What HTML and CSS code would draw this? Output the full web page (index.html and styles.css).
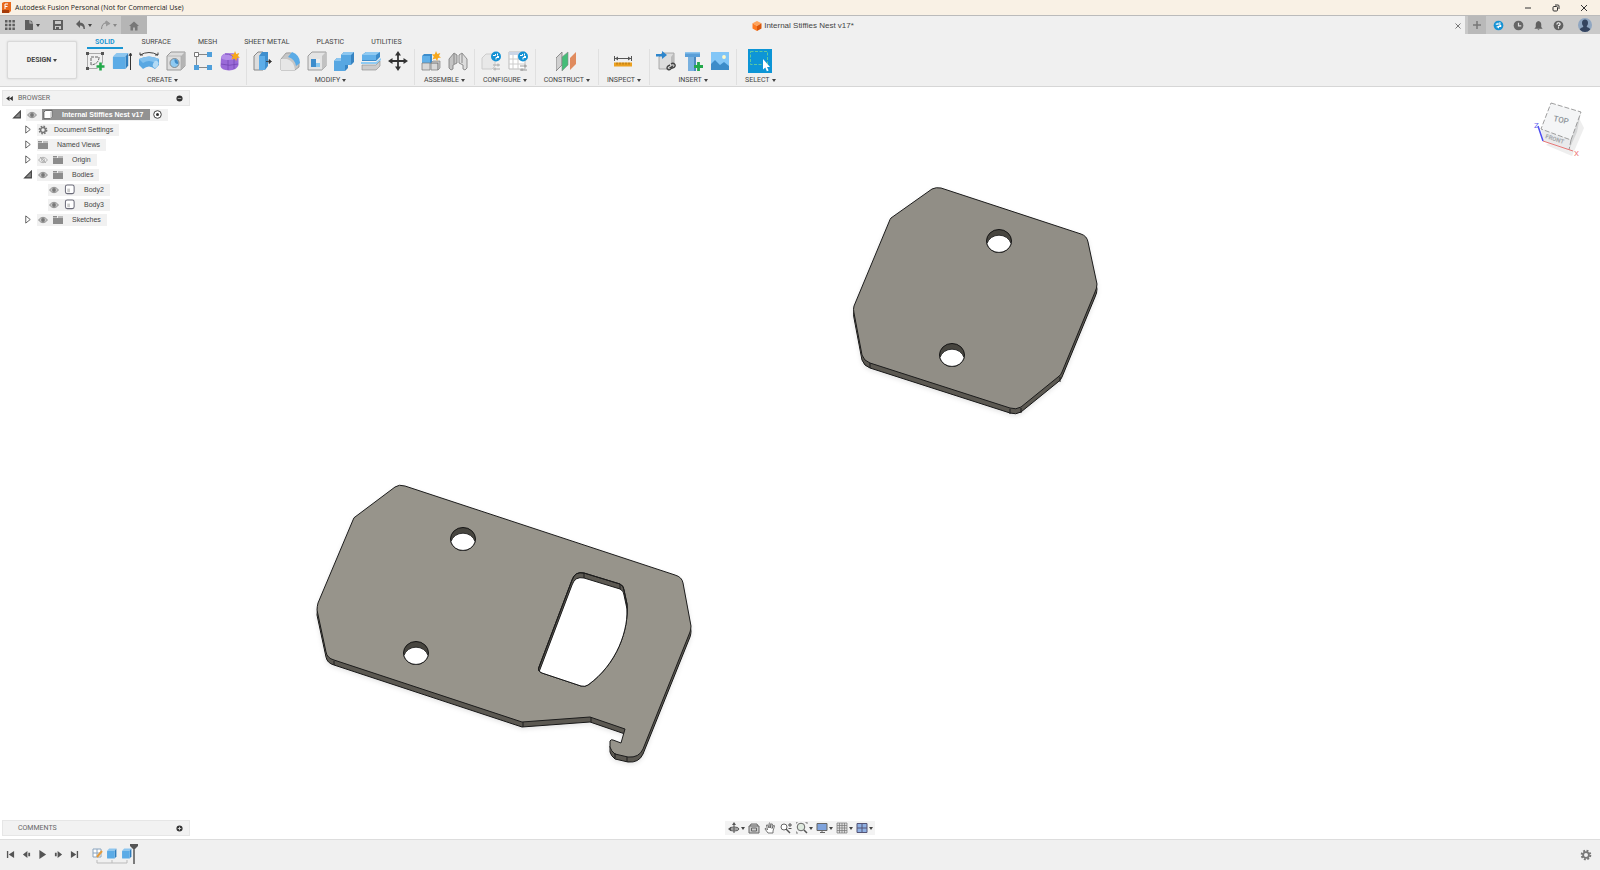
FILE: index.html
```html
<!DOCTYPE html>
<html lang="en">

<head>
    <meta charset="UTF-8">
    <meta name="viewport" content="width=device-width, initial-scale=1.0">
    <title>Autodesk Fusion Personal (Not for Commercial Use)</title>
    <link rel="stylesheet" href="styles.css">
</head>

<body>
    <!-- shared shapes -->
    <svg class="defs" width="0" height="0">
        <symbol id="eye" viewBox="0 0 10 8">
            <path d="M.5 4Q5-1.5 9.500 4Q5 9.500.5 4z" fill="#c4c4c4" stroke="#8a8a8a" stroke-width=".9" />
            <circle cx="5" cy="4" r="1.900" fill="#777" />
        </symbol>
        <symbol id="eye-off" viewBox="0 0 10 8">
            <path d="M.5 4Q5-1.5 9.500 4Q5 9.500.5 4zM2 1l6 6" fill="none" stroke="#aaa" stroke-width=".9" />
            <circle cx="5" cy="4" r="1.500" fill="none" stroke="#aaa" stroke-width=".8" />
        </symbol>
        <symbol id="folder" viewBox="0 0 10 8">
            <path d="M0 0h4v1.500H0zM5 .5h5v1H5zM0 2h10v6H0z" fill="#8c8c8c" />
        </symbol>
        <symbol id="body" viewBox="0 0 12 12">
            <rect x="1" y="1" width="9.500" height="9.500" rx="2" fill="#fff" stroke="#6a6a78" stroke-width="1.100" />
            <path d="M3 5h3v4H3z" fill="#ccc" />
        </symbol>
        <symbol id="component" viewBox="0 0 12 12">
            <path d="M1.500 3.500l2-2h7v7l-2 2h-7z" fill="#fff" stroke="#555" />
            <path d="M8.500 3.500l2-2v7l-2 2z" fill="#ccc" />
        </symbol>
        <symbol id="closed" viewBox="0 0 8 10">
            <path d="M1.500 1v8L6.500 5z" fill="#fff" stroke="#555" />
        </symbol>
        <symbol id="open" viewBox="0 0 8 8">
            <path d="M7 1v6H1z" fill="#888" stroke="#444" />
        </symbol>
        <symbol id="gear" viewBox="0 0 12 12">
            <circle cx="6" cy="6" r="4.300" fill="none" stroke="#777" stroke-width="2" stroke-dasharray="1.900 1.480" />
            <circle cx="6" cy="6" r="2.900" fill="none" stroke="#777" stroke-width="1.800" />
        </symbol>
        <symbol id="box" viewBox="0 0 20 20">
            <path d="M1 5l4-4h13l-3 4z" fill="#8dc6ef" />
            <path d="M15 5l3-4v14l-3 4z" fill="#2f7dbd" />
            <rect x="1" y="5" width="14" height="14" rx="1" fill="#5babe6" />
        </symbol>
    </svg>

    <header class="titlebar">
        <svg class="logo" viewBox="0 0 9 11">
            <path d="M0 1l2-1h7v9l-2 2H0z" fill="#e8681a" />
            <path d="M0 8h7v3H0z" fill="#a53a08" />
            <path d="M3 7V2h3M3 4.500h2.500" fill="none" stroke="#fff" />
        </svg>
        <h1>Autodesk Fusion Personal (Not for Commercial Use)</h1>
        <div class="window-btns">
            <button aria-label="Minimize"><svg viewBox="0 0 8 8"><path d="M1 4h6" /></svg></button>
            <button aria-label="Restore"><svg viewBox="0 0 8 8"><rect x="1" y="2.500" width="4.500" height="4.500" rx="1" /><path d="M3 1h3q1 0 1 1v3" /></svg></button>
            <button aria-label="Close"><svg viewBox="0 0 8 8"><path d="M1 1l6 6M7 1L1 7" /></svg></button>
        </div>
    </header>

    <div class="tabbar">
        <div class="quick">
            <button aria-label="Data panel"><svg viewBox="0 0 10 10"><path d="M0 0h2.500v2.500H0zM3.700 0h2.500v2.500H3.700zM7.400 0h2.500v2.500H7.400zM0 3.700h2.500v2.500H0zM3.700 3.700h2.500v2.500H3.700zM7.400 3.700h2.500v2.500H7.400zM0 7.400h2.500v2.500H0zM3.700 7.400h2.500v2.500H3.700zM7.400 7.400h2.500v2.500H7.400z" /></svg></button>
            <button class="drop" aria-label="File"><svg viewBox="0 0 10 10"><path d="M1 0h4.500v3.500H9V10H1zM6.500 0L9 2.500H6.500z" /></svg></button>
            <button aria-label="Save"><svg viewBox="0 0 10 10"><path fill-rule="evenodd" d="M0 0h10v10H0zM2 1v3h6V1zM2 6v3h1V7h3v2h2V6z" /></svg></button>
            <button class="drop" aria-label="Undo"><svg viewBox="0 0 10 10"><path d="M0 4l4-4v2.500q5 0 5 6.500H7.500Q7.500 5.500 4 5.500V8z" /></svg></button>
            <button class="drop redo" aria-label="Redo"><svg viewBox="0 0 10 10"><path d="M9 4L5 1v2Q1 3 .5 9" fill="none" stroke="#888" /><path d="M5 .5v6L9.500 3.500z" fill="#999" /></svg></button>
        </div>
        <button class="home" aria-label="Home"><svg viewBox="0 0 10 10"><path d="M5 .5L0 5h1.500v4.500h2.500V6.500h2v3h2.500V5H10z" /></svg></button>
        <div class="doc-tab">
            <span class="doc-name">
                <svg viewBox="0 0 10 10"><path d="M5 0l4.500 2.300L5 5 .5 2.300z" fill="#ffa45c" /><path d="M.5 2.300L5 5v5L.5 7.600z" fill="#ff7b22" /><path d="M9.500 2.300L5 5v5l4.500-2.400z" fill="#d9560b" /></svg>
                Internal Stiffies Nest v17*
            </span>
            <button class="doc-close" aria-label="Close tab"><svg viewBox="0 0 8 8"><path d="M1.500 1.500l5 5M6.500 1.500l-5 5" stroke="#777" fill="none" /></svg></button>
        </div>
        <button class="new-tab" aria-label="New tab"><svg viewBox="0 0 10 10"><path d="M5 1v8M1 5h8" stroke="#777" stroke-width="1.500" /></svg></button>
        <div class="account">
            <button aria-label="Extensions"><svg viewBox="0 0 12 12"><circle cx="6" cy="6" r="5.300" fill="#1492d4" /><path d="M3 4.500h2.500V3M9 6H7M6 9V7h3M4 7.500h2M7.500 2.500v3" stroke="#fff" stroke-width="1.200" fill="none" /></svg></button>
            <button aria-label="Job status"><svg viewBox="0 0 12 12"><circle cx="6" cy="6" r="5.300" fill="#666" /><path d="M6 3v3.500h3" stroke="#ddd" stroke-width="1.300" fill="none" /></svg></button>
            <button aria-label="Notifications"><svg viewBox="0 0 12 12"><path d="M6 1q3 .5 3 4v2.500L10.500 9.500h-9L3 7.500V5q0-3.500 3-4zM4.800 10h2.400L6 11.200z" fill="#606060" /></svg></button>
            <button aria-label="Help"><svg viewBox="0 0 12 12"><circle cx="6" cy="6" r="5.300" fill="#606060" /><path d="M4.200 4.800Q4.200 3 6 3t1.800 1.500Q7.800 5.500 6 6.200V7M6 8v1.300" stroke="#fff" stroke-width="1.200" fill="none" /></svg></button>
            <button class="avatar" aria-label="Profile"><svg viewBox="0 0 14 14"><circle cx="7" cy="7" r="7" fill="#8fa6c1" /><path d="M7 1.500q3 0 3 3.500 0 2-1.200 3v1q3 .5 3.500 2.500Q10 14 7 14t-5.300-2.500q.5-2 3.500-2.500V8Q4 7 4 5q0-3.500 3-3.500z" fill="#34445f" /></svg></button>
        </div>
    </div>

    <div class="ribbon">
        <button class="workspace drop">DESIGN</button>
        <div class="ribbon-main">
            <nav class="ribbon-tabs">
                <a href="#" class="active">SOLID</a>
                <a href="#">SURFACE</a>
                <a href="#">MESH</a>
                <a href="#">SHEET METAL</a>
                <a href="#">PLASTIC</a>
                <a href="#">UTILITIES</a>
            </nav>
            <div class="groups">
                <div class="group">
                    <div class="tools">
                        <button aria-label="Create Sketch"><svg viewBox="0 0 20 20"><path d="M2.500 2.500h15v10M2.500 2.500v15h10" fill="none" stroke="#aaa" /><path d="M1 1h3v3H1zM16 1h3v3h-3zM1 16h3v3H1z" fill="#555" /><path d="M6 14V6h8q0 7-8 8z" fill="none" stroke="#666" stroke-dasharray="3 1" /><path d="M15.500 11.500v8M11.500 15.500h8" stroke="#22a84a" stroke-width="2.600" /></svg></button>
                        <button aria-label="Extrude"><svg viewBox="0 0 20 20"><use href="#box" width="18" height="20" /><path d="M18.500 19V3M17 5l1.500-3L20 5" stroke="#333" fill="none" /></svg></button>
                        <button aria-label="Revolve"><svg viewBox="0 0 20 20"><path d="M0 8Q10 3 20 8v6l-4 4q-6-5-12 0l-4-4z" fill="#5aa8e2" /><path d="M0 8Q10 3 20 8l-4 4q-6-4-12 0z" fill="#83c1ee" /><ellipse cx="16.800" cy="13.500" rx="2.500" ry="3.600" fill="#b4dbf5" transform="rotate(25 17 13)" /><path d="M1 4Q10-1 19 4M1 1.500V4h3M19 1.500V4h-3" fill="none" stroke="#444" /></svg></button>
                        <button aria-label="Hole"><svg viewBox="0 0 20 20"><path d="M1 5l4-4h14v14l-4 4H1z" fill="#ddd" stroke="#999" /><path d="M15 5l4-4v14l-4 4z" fill="#b4b4b4" /><path d="M1 5h14v14" fill="none" stroke="#aaa" stroke-width=".7" /><circle cx="8.500" cy="12" r="4.500" fill="#8fcaf2" stroke="#777" stroke-width=".8" /><path d="M8.500 8a4 4 0 0 1 3.500 5Q8 13 8.500 8z" fill="#3f8cc8" /></svg></button>
                        <button aria-label="Pattern"><svg viewBox="0 0 20 20"><path d="M6 3.500h8M3.500 6v8M6 16.500h8" stroke="#888" /><path d="M1.500 1.500h4v4h-4z" fill="#fff" stroke="#777" /><path d="M14 1h5v5h-5zM14 14h5v5h-5zM1 14h5v5H1z" fill="#4f9fdb" /></svg></button>
                        <button aria-label="Create Form"><svg viewBox="0 0 20 20"><path d="M1 7q1-5 8-5 9 0 9.500 5v7Q17 19 9 19.500 1 19 .5 15z" fill="#9a6ad8" /><path d="M1 7q1-5 8-5 9 0 9.500 5Q14 9 8.500 9 3 9 1 7z" fill="#b38ce8" /><path d="M8 9v10M1 13q8 2.500 17 0M5 3q8 0 9 5v10" fill="none" stroke="#7446b4" stroke-width=".8" /><path d="M15 0l1.300 3 3-1-1.300 3 2 1.500-3 .5-.8 3-1.700-2.500-3 1 1.300-3-2-2 3-.3z" fill="#f7a81b" /></svg></button>
                    </div>
                    <button class="label drop">CREATE</button>
                </div>
                <div class="group">
                    <div class="tools">
                        <button aria-label="Press Pull"><svg viewBox="0 0 20 20"><path d="M1 5l4-4h5v18H1z" fill="#ddd" stroke="#888" /><path d="M6 5l3-4h6v14l-3 4H6z" fill="#3f8fce" /><path d="M6 5h6v14H6z" fill="#5dade8" /><path d="M13 10.500h4M16 8.500l2.500 2-2.500 2z" stroke="#333" fill="#333" stroke-width=".8" /></svg></button>
                        <button aria-label="Fillet"><svg viewBox="0 0 20 20"><path d="M1 8l5-6q9-2 13 9v5l-4 3H1z" fill="#c6c6c6" stroke="#888" stroke-width=".7" /><path d="M1 8h6q7 2 8 11H1z" fill="#e6e6e6" /><path d="M8 6l4-5q8 3 8 11l-4 3Q15 8 8 6z" fill="#5aabe6" /></svg></button>
                        <button aria-label="Shell"><svg viewBox="0 0 20 20"><path d="M1 5l4-4h14v14l-4 4H1z" fill="#e4e4e4" stroke="#888" stroke-width=".8" /><path d="M15 5l4-4v14l-4 4z" fill="#c2c2c2" /><path d="M4 8h9v8H4z" fill="#8bc9f0" /><path d="M4 8h5v8H4z" fill="#3d8dcc" /><path d="M9 8h4v4H9z" fill="#eee" /></svg></button>
                        <button aria-label="Combine"><svg viewBox="0 0 20 20"><path d="M7 4l3-3h10v10l-3 3h-3v3l-3 3H0V10l3-3h4z" fill="#3784c2" /><path d="M7 4h10v10h-6v6H0V10h7z" fill="#57a7e2" /><path d="M7 4l3-3h10l-3 3zM0 10l3-3h4v3z" fill="#8bc6f0" /></svg></button>
                        <button aria-label="Offset Face"><svg viewBox="0 0 20 20"><path d="M1 4l4-3h14v5l-4 4H1z" fill="#3c8bc9" /><path d="M1 4h14v5H1z" fill="#62b0e9" /><path d="M1 4l4-3h14l-4 3z" fill="#90caf2" /><path d="M0 11h15l5-4v2l-4 4H0z" fill="#8fcbf3" /><path d="M1 14h14l4-4v5l-4 4H1z" fill="#ccc" stroke="#888" stroke-width=".6" /></svg></button>
                        <button aria-label="Move"><svg viewBox="0 0 20 20"><path d="M10 3v14M3 10h14" stroke="#333" stroke-width="1.800" /><path d="M10 0l3 4.500H7zM10 20l3-4.500H7zM0 10l4.500-3v6zM20 10l-4.500-3v6z" fill="#333" /></svg></button>
                    </div>
                    <button class="label drop">MODIFY</button>
                </div>
                <div class="group">
                    <div class="tools">
                        <button aria-label="New Component"><svg viewBox="0 0 20 20"><path d="M1 5l2-2h8v8l-2 2H1z" fill="#3d8dcc" /><path d="M1 5h8v8H1z" fill="#60afe8" /><path d="M1 12h8v7H1zM10 12h7v7h-7z" fill="#d8d8d8" stroke="#777" stroke-width=".7" /><path d="M10 12l2-2h7v7l-2 2v-7z" fill="#c3c3c3" stroke="#777" stroke-width=".6" /><path d="M15 0l1.300 3 3-1-1.300 3 2 1.500-3 .5-.8 3-1.700-2.500-3 1 1.300-3-2-2 3-.3z" fill="#f7a81b" /></svg></button>
                        <button aria-label="Joint"><svg viewBox="0 0 20 20"><path d="M1 8l5-6 3 2v8l-4 2v4l-2 1-2-2z" fill="#c4c4c4" stroke="#777" stroke-width=".8" /><path d="M11 4l3-2 5 6v9l-2 2-2-1v-4l-4-2z" fill="#ddd" stroke="#777" stroke-width=".8" /><path d="M6 3v10M14 3v9" stroke="#888" /></svg></button>
                    </div>
                    <button class="label drop">ASSEMBLE</button>
                </div>
                <div class="group">
                    <div class="tools">
                        <button aria-label="Configure"><svg viewBox="0 0 20 20"><path d="M1 7l4-4h9v12l-3 3H1z" fill="#e8e8e8" stroke="#ccc" /><path d="M12 14h7M12 18h7M17 12.500v3M14 16.500v3" stroke="#aaa" /><circle cx="15" cy="5.500" r="5" fill="#1492d4" /><path d="M12 4.500h2.500V3M18 5.500h-2M15 8.500v-2h3M16.500 2.500v2" stroke="#fff" fill="none" /></svg></button>
                        <button aria-label="Configuration table"><svg viewBox="0 0 20 20"><path d="M1 1h16v17H1z" fill="#fff" stroke="#bbb" /><path d="M1 1h16v3H1z" fill="#ccd5e6" /><path d="M1 8h16M1 13h16M5 4v14M10 4v14" stroke="#ccc" /><path d="M12 15h7M12 19h7M17 13.500v3M14 17.500v3" stroke="#999" /><circle cx="15" cy="5.500" r="5" fill="#1492d4" /><path d="M12 4.500h2.500V3M18 5.500h-2M15 8.500v-2h3M16.500 2.500v2" stroke="#fff" fill="none" /></svg></button>
                    </div>
                    <button class="label drop">CONFIGURE</button>
                </div>
                <div class="group">
                    <div class="tools">
                        <button aria-label="Offset Plane"><svg viewBox="0 0 20 20"><path d="M0 7l6-6v13l-6 6z" fill="#d0d0d0" stroke="#777" stroke-width=".8" /><path d="M6 6l6-5v13l-6 6z" fill="#45bd78" stroke="#888" stroke-width=".6" /><path d="M14 7l6-6v12l-6 6z" fill="#e08b5e" /></svg></button>
                    </div>
                    <button class="label drop">CONSTRUCT</button>
                </div>
                <div class="group">
                    <div class="tools">
                        <button aria-label="Measure"><svg viewBox="0 0 20 20"><path d="M1.500 5v5M18.500 5v5M2 7.500h16" stroke="#555" /><path d="M2 7.500l3-2v4zM18 7.500l-3-2v4z" fill="#555" /><path d="M1 11.500h18v4H1z" fill="#eca120" /><path d="M4 11.500v2M7 11.500v2M10 11.500v2M13 11.500v2M16 11.500v2" stroke="#9a6207" stroke-width=".8" /></svg></button>
                    </div>
                    <button class="label drop">INSPECT</button>
                </div>
                <div class="group">
                    <div class="tools">
                        <button aria-label="Insert Derive"><svg viewBox="0 0 20 20"><path d="M3 6l3-4h12v12l-3 4H3z" fill="#ddd" stroke="#999" stroke-width=".8" /><path d="M15 6l3-4v12l-3 4z" fill="#bbb" /><path d="M0 3h6V0l5 4-5 4V5.500H0z" fill="#2e86cc" /><path d="M14 14l-2 1q-2 2 0 3.500 2 1 3-1M15 17.500l3-1q2-2 .5-3.500t-3.500 0M13.500 17l3.500-2" fill="none" stroke="#444" stroke-width="1.400" /></svg></button>
                        <button aria-label="Insert Fastener"><svg viewBox="0 0 20 20"><path d="M2 1h15v5H2z" fill="#5a9fd8" /><path d="M2 1h15v1.500H2z" fill="#8fc5ee" /><path d="M5 6h8v14H5z" fill="#79b1df" /><path d="M11 6h2v14h-2z" fill="#4a88be" /><path d="M15.500 11v9M11 15.500h9" stroke="#22a84a" stroke-width="2.800" /></svg></button>
                        <button aria-label="Canvas"><svg viewBox="0 0 20 20"><path d="M1 1h18v18H1z" fill="#82c6f7" /><path d="M1 13l4-4 5 5 4-3 5 4v4H1z" fill="#3c8cc9" /><circle cx="14" cy="6" r="1.900" fill="#fff8c8" /></svg></button>
                    </div>
                    <button class="label drop">INSERT</button>
                </div>
                <div class="group">
                    <div class="tools">
                        <button class="select-btn" aria-label="Select"><svg viewBox="0 0 24 24"><path d="M0 0h24v24H0z" fill="#0d95d6" /><path d="M2.500 2.500h17v13h-17z" fill="none" stroke="#5dc8a0" stroke-dasharray="3 1.500" /><path d="M15 10v10.500l2.300-2 1.600 3.700 1.700-.8-1.600-3.500h3z" fill="#fff" /></svg></button>
                    </div>
                    <button class="label drop">SELECT</button>
                </div>
            </div>
        </div>
    </div>

    <main class="viewport">
        <svg class="model" viewBox="0 87 1600 752">
            <defs>
                <path id="plate-a" d="M891 218l41-29q4-2 9-1l140 46q6 2 7 8l9 42q0 4-2 8l-33 80q-1 3-4 5l-37 30q-5 3-11 1l-140-45q-6-2-8-8l-8-42q-1-4 0-7l35-84q1-3 2-4z" />
                <path id="plate-b" d="M355 517l40-30q4-3 10-1l270 89q7 2 8 8l8 43q0 3-1 6l-47 117q-4 9-15 8l-13-3q-4-3-5-7v-6q1-2 3-1l8 3 4-14-35-12-68 5-188-62q-7-2-8-8l-9-42q0-3 1-7l35-83q1-3 2-3z" />
                <path id="window" d="M572 580q3-9 12-7l36 11q4 2 4 6l3 14c2 26-10 60-39 81q-3 2-7 1l-39-13q-5-2-3-6z" />
                <clipPath id="window-clip"><use href="#window" /></clipPath>
                <g id="hole">
                    <ellipse rx="12.500" ry="11.500" fill="#47453f" stroke="#151515" />
                    <path d="M-12.100 2.800A12.500 11.500 0 0 1 12.100 2.800A12.500 11.500 0 0 1-12.100 2.800z" fill="#fff" stroke="#151515" stroke-width=".8" />
                </g>
            </defs>
            <g class="plate">
                <use class="side" href="#plate-a" y="5" />
                <use class="side-fill" href="#plate-a" y="3" />
                <use class="face" href="#plate-a" />
                <path class="edge" d="M870 363v5M1010 409v5M1021 408v5M1060 377v5" />
                <use href="#hole" x="999" y="241" />
                <use href="#hole" x="952" y="355" />
            </g>
            <g class="plate plate-light">
                <use class="side" href="#plate-b" y="5" />
                <use class="side-fill" href="#plate-b" y="3" />
                <use class="face" href="#plate-b" />
                <path class="edge" d="M334 661v4M523 722v5M591 717v5M615 753v5M627 757v5" />
                <use href="#hole" x="463" y="539" />
                <use href="#hole" x="416" y="653" />
                <use class="side" href="#window" />
                <g clip-path="url(#window-clip)">
                    <use class="cut" href="#window" y="5" />
                    <path class="edge" d="M584 573v5M620 584v5" />
                </g>
                <use class="edge" href="#window" />
            </g>
        </svg>

        <svg class="viewcube" viewBox="1530 98 56 62">
            <path d="M1546 145l26 11 12-28-5-10z" fill="#e2e2e2" opacity=".6" />
            <path d="M1551 103l30 9-10 28-30-11z" fill="#f4f5f6" />
            <path d="M1541 129l30 11-2 10-26-9z" fill="#e9eaeb" />
            <path d="M1581 112l-10 28-2 10 8-18z" fill="#d5d6d7" />
            <path d="M1551 103l30 9-10 28-30-11zM1571 140l-2 10" fill="none" stroke="#888" stroke-width=".8" stroke-dasharray="5 2" />
            <text x="1553" y="121" transform="rotate(12 1553 121)" class="cube-top">TOP</text>
            <text x="1545" y="138" transform="rotate(18 1545 138)" class="cube-front">FRONT</text>
            <path d="M1543 141l-5-15" stroke="#4d4df0" stroke-width="1.500" />
            <path d="M1543 141l30 10" stroke="#e87878" />
            <text x="1534" y="128" class="axis-z">Z</text>
            <text x="1574" y="156" class="axis-x">X</text>
        </svg>

        <aside class="browser">
            <div class="panel-head">
                <svg class="collapse" viewBox="0 0 8 6"><path d="M4 0v6L0 3zM8 0v6L4 3z" fill="#333" /></svg>
                <span>BROWSER</span>
                <button aria-label="Display settings"><svg viewBox="0 0 8 8"><circle cx="4" cy="4" r="3.500" fill="#333" /><path d="M2 4h4" stroke="#aaa" /></svg></button>
            </div>
            <ul class="tree">
                <li class="root">
                    <svg class="twisty"><use href="#open" /></svg>
                    <div class="node">
                        <svg class="eye"><use href="#eye" /></svg>
                        <span class="picked"><svg class="body"><use href="#component" /></svg>Internal Stiffies Nest v17</span>
                        <svg class="radio" viewBox="0 0 9 9"><circle cx="4.500" cy="4.500" r="3.800" fill="#fff" stroke="#444" /><circle cx="4.500" cy="4.500" r="1.500" fill="#333" /></svg>
                    </div>
                </li>
                <li><svg class="twisty"><use href="#closed" /></svg>
                    <div class="node"><svg class="gear"><use href="#gear" /></svg>Document Settings</div>
                </li>
                <li><svg class="twisty"><use href="#closed" /></svg>
                    <div class="node"><svg class="folder"><use href="#folder" /></svg>Named Views</div>
                </li>
                <li><svg class="twisty"><use href="#closed" /></svg>
                    <div class="node"><svg class="eye"><use href="#eye-off" /></svg><svg class="folder"><use href="#folder" /></svg>Origin</div>
                </li>
                <li><svg class="twisty"><use href="#open" /></svg>
                    <div class="node"><svg class="eye"><use href="#eye" /></svg><svg class="folder"><use href="#folder" /></svg>Bodies</div>
                </li>
                <li class="leaf">
                    <div class="node"><svg class="eye"><use href="#eye" /></svg><svg class="body"><use href="#body" /></svg>Body2</div>
                </li>
                <li class="leaf">
                    <div class="node"><svg class="eye"><use href="#eye" /></svg><svg class="body"><use href="#body" /></svg>Body3</div>
                </li>
                <li><svg class="twisty"><use href="#closed" /></svg>
                    <div class="node"><svg class="eye"><use href="#eye" /></svg><svg class="folder"><use href="#folder" /></svg>Sketches</div>
                </li>
            </ul>
        </aside>

        <div class="bottom">
            <div class="panel-head">
                <span>COMMENTS</span>
                <button aria-label="Add comment"><svg viewBox="0 0 8 8"><circle cx="4" cy="4" r="3.500" fill="#333" /><path d="M2 4h4M4 2v4" stroke="#ddd" /></svg></button>
            </div>
            <div class="navbar">
                <button class="drop" aria-label="Orbit"><svg viewBox="0 0 12 12"><ellipse cx="6" cy="7" rx="5" ry="2" fill="none" stroke="#555" /><path d="M6 2v9M2 7h8" stroke="#555" /><path d="M6 0l2 3H4zM0 7l3-2v4z" fill="#555" /></svg></button>
                <button aria-label="Look At"><svg viewBox="0 0 12 12"><path d="M1 4h10v7H1zM2 4l1-2h6l1 2M3.500 6h5v3h-5z" fill="#ccc" stroke="#666" /></svg></button>
                <button aria-label="Pan"><svg viewBox="0 0 12 12"><path d="M4 11L1 7q0-1 1-.5L3.500 8 2.500 3q.5-1 1.200 0L5 6V1.500q.6-1 1.200 0V6l1-4q.8-.8 1.200 0L8 6.500l1.500-3q1-.5 1 .5L9 9v2z" fill="#fff" stroke="#555" stroke-width=".8" /></svg></button>
                <button aria-label="Zoom"><svg viewBox="0 0 12 12"><circle cx="4" cy="5" r="3" fill="#fff" stroke="#666" /><path d="M6 7l4 4" stroke="#555" stroke-width="1.500" /><path d="M8 3h4M10 1v4M8.500 6.500h3" stroke="#555" /></svg></button>
                <button class="drop" aria-label="Fit"><svg viewBox="0 0 12 12"><circle cx="5" cy="5" r="3.800" fill="#dfeadf" stroke="#666" /><path d="M8 8l3 3" stroke="#555" stroke-width="1.500" /><path d="M0 2V0h2M9 0h2v2M0 9v2h2" fill="none" stroke="#666" stroke-width=".8" /></svg></button>
                <button class="drop" aria-label="Display Settings"><svg viewBox="0 0 12 12"><path d="M1 1.500h10v7H1z" fill="#7fa3dc" stroke="#666" /><path d="M4 10.500h5M6 9v2" stroke="#666" /></svg></button>
                <button class="drop" aria-label="Grid and Snaps"><svg viewBox="0 0 12 12"><path d="M1 1h10v10H1z" fill="#ddd" /><path d="M1 1h10v10H1zM3.500 1v10M6 1v10M8.500 1v10M1 3.500h10M1 6h10M1 8.500h10" fill="none" stroke="#777" stroke-width=".7" /></svg></button>
                <button class="drop" aria-label="Viewports"><svg viewBox="0 0 12 12"><path d="M1 1.500h10v9H1z" fill="#8fb0e2" stroke="#557" /><path d="M6 1.500v9M1 6h10" stroke="#557" /></svg></button>
            </div>
        </div>
    </main>

    <footer class="timeline">
        <div class="playback">
            <button aria-label="Go to start"><svg viewBox="0 0 10 10"><path d="M1 1h1.500v8H1zM9 1v8L3 5z" /></svg></button>
            <button aria-label="Step back"><svg viewBox="0 0 10 10"><path d="M6 1v8L1 5zM7 3h2v4H7z" /></svg></button>
            <button aria-label="Play"><svg viewBox="0 0 10 10"><path d="M1.500 0v10L9 5z" /></svg></button>
            <button aria-label="Step forward"><svg viewBox="0 0 10 10"><path d="M4 1v8l5-4zM1 3h2v4H1z" /></svg></button>
            <button aria-label="Go to end"><svg viewBox="0 0 10 10"><path d="M7.500 1H9v8H7.500zM1 1v8l6-4z" /></svg></button>
        </div>
        <svg class="features" viewBox="0 0 48 24">
            <path d="M1 6h8v8H1zM1 10h8M5 6v8" fill="#fff" stroke="#8aa4be" />
            <path d="M10 8L5 14" stroke="#e59b3c" stroke-width="2" />
            <use href="#box" x="14" y="5" width="12" height="11" />
            <use href="#box" x="29" y="5" width="12" height="11" />
            <path d="M5 17v3h30v-3M20 17v3" fill="none" stroke="#bbb" />
            <path d="M38 1h8v2l-3 3h-2l-3-3z" fill="#555" />
            <path d="M42 3v18" stroke="#555" stroke-width="1.500" />
        </svg>
        <button class="settings" aria-label="Timeline settings"><svg viewBox="0 0 12 12"><use href="#gear" /></svg></button>
    </footer>
</body>

</html>
```
FILE: styles.css
```css
* {
    box-sizing: border-box;
    margin: 0;
    padding: 0;
}

body {
    display: flex;
    flex-direction: column;
    height: 100vh;
    overflow: hidden;
    background: #fff;
    color: #444;
    font: 7px/9px "Roboto", "Liberation Sans", sans-serif;
}

svg {
    display: block;
    flex: none;
}

button {
    display: flex;
    align-items: center;
    justify-content: center;
    border: 0;
    background: none;
    color: inherit;
    font: inherit;
}

a {
    color: inherit;
    text-decoration: none;
}

ul {
    list-style: none;
}

.defs {
    position: absolute;
}

/* small arrow of the drop-down buttons */
.drop::after {
    content: "";
    margin-left: 2px;
    border: 2px solid transparent;
    border-top: 3px solid #444;
    border-bottom: 0;
}

/* title bar */
.titlebar {
    display: flex;
    align-items: center;
    height: 15px;
    padding: 0 2px;
    background: #f9f1e5;
}

.logo {
    width: 9px;
    height: 11px;
    margin-right: 4px;
}

.titlebar h1 {
    flex: 1;
    font: 7px/15px "Open Sans", sans-serif;
    color: #222;
}

.window-btns {
    display: flex;
}

.window-btns button {
    width: 28px;
    height: 14px;
}

.window-btns svg {
    width: 8px;
    height: 8px;
    fill: none;
    stroke: #333;
}

/* quick access and document tabs */
.tabbar {
    display: flex;
    height: 19px;
    border-top: 1px solid #bbb;
    background: #c9c9c9;
}

.quick {
    display: flex;
    align-items: center;
    gap: 9px;
    width: 121px;
    padding-left: 5px;
}

.quick button:nth-child(3),
.quick button:nth-child(4) {
    margin-left: 4px;
}

.tabbar svg {
    width: 10px;
    height: 10px;
    fill: #5e5e5e;
}

.quick .redo::after {
    border-top-color: #888;
}

.home {
    width: 26px;
    padding-top: 2px;
    background: #b5b5b5;
}

.home svg {
    fill: #777;
}

.doc-tab {
    display: flex;
    flex: 1;
    align-items: center;
    padding-top: 1px;
    background: #f0f0f0;
}

.doc-name {
    display: flex;
    flex: 1;
    align-items: center;
    justify-content: center;
    gap: 2px;
    padding-left: 8px;
    font: 8px/18px "Liberation Sans", Arial, sans-serif;
}

.doc-close {
    width: 14px;
    height: 18px;
}

.doc-close svg {
    width: 8px;
    height: 8px;
}

.new-tab {
    width: 18px;
    margin: 0 2px 0 3px;
    background: #b9b9b9;
}

.account {
    display: flex;
    align-items: center;
    padding-right: 8px;
}

.account button {
    width: 20px;
}

.account .avatar {
    width: 24px;
    justify-content: flex-end;
}

.account svg {
    width: 11px;
    height: 11px;
}

.account .avatar svg {
    width: 14px;
    height: 14px;
}

/* ribbon */
.ribbon {
    display: flex;
    height: 53px;
    border-bottom: 1px solid #d6d6d6;
    background: #f0f0f0;
}

.workspace {
    width: 70px;
    height: 38px;
    margin: 7px 2px 0 7px;
    border: 1px solid #d9d9d9;
    border-radius: 2px;
    background: #f3f3f3;
    box-shadow: 0 0 2px #ccc;
    font-weight: 700;
}

.ribbon-tabs {
    display: flex;
    gap: 11px;
    height: 15px;
    padding-left: 8px;
}

.ribbon-tabs a {
    padding: 4px 8px 0;
    line-height: 8px;
}

.ribbon-tabs .active {
    border-bottom: 2px solid #1a96d2;
    color: #1a96d2;
    font-weight: 700;
}

.groups {
    display: flex;
}

.group {
    display: flex;
    flex-direction: column;
    align-items: center;
    padding: 0 3px 0 2px;
    border-right: 1px solid #e0e0e0;
}

.group:last-child {
    border: 0;
}

.tools {
    display: flex;
    align-items: center;
    height: 24px;
}

.tools button {
    width: 27px;
}

.tools svg {
    width: 20px;
    height: 20px;
}

.tools .select-btn svg {
    width: 24px;
    height: 24px;
}

.label {
    height: 12px;
    padding: 2px 5px 0 6px;
}

/* canvas */
.viewport {
    position: relative;
    display: flex;
    flex: 1;
    flex-direction: column;
    justify-content: space-between;
    min-height: 0;
    padding: 3px 2px;
}

.model {
    position: absolute;
    inset: 0;
    width: 100%;
    height: 100%;
}

.plate {
    filter: drop-shadow(0 2px 2px rgba(0, 0, 0, .1));
}

.side {
    fill: #5c5952;
    stroke: #151515;
}

.side-fill {
    fill: #5c5952;
}

.face {
    fill: #918e86;
    stroke: #1c1c1c;
}

.plate-light .face {
    fill: #97948b;
}

.edge {
    fill: none;
    stroke: #1c1c1c;
}

.cut {
    fill: #fff;
    stroke: #1c1c1c;
}

.viewcube {
    position: absolute;
    top: 11px;
    right: 14px;
    width: 56px;
    height: 62px;
}

.cube-top {
    font: 500 8px "Roboto", sans-serif;
    fill: #8f959b;
}

.cube-front {
    font: 700 6px "Roboto", sans-serif;
    fill: #a5a8ab;
}

.axis-z,
.axis-x {
    font: 8px "Roboto", sans-serif;
    fill: #6464ee;
}

.axis-x {
    fill: #ee7777;
}

.browser {
    position: relative;
}

.panel-head {
    display: flex;
    align-items: center;
    width: 188px;
    height: 16px;
    padding: 0 6px 0 15px;
    border: 1px solid #e6e6e6;
    background: #f2f2f2;
    color: #666;
}

.panel-head span {
    flex: 1;
}

.panel-head svg {
    width: 7px;
    height: 7px;
}

.panel-head .collapse {
    height: 5px;
    margin: 0 5px 0 -12px;
}

.tree {
    display: flex;
    flex-direction: column;
    gap: 4px;
    padding-top: 3px;
    font: 7px/11px "Liberation Sans", Arial, sans-serif;
}

.tree li {
    display: flex;
    align-items: center;
    gap: 4px;
    height: 11px;
    padding-left: 21px;
}

.tree .root {
    padding-left: 10px;
}

.tree .leaf {
    padding-left: 46px;
}

.node {
    display: flex;
    align-items: center;
    height: 12px;
    padding: 0 6px 0 1px;
    background: #f1f1f1;
}

.twisty {
    width: 10px;
    height: 9px;
}

.eye {
    width: 10px;
    height: 8px;
    margin-right: 5px;
}

.folder {
    width: 10px;
    height: 8px;
    margin-right: 9px;
}

.gear {
    width: 10px;
    height: 10px;
    margin-right: 6px;
}

.body {
    width: 12px;
    height: 11px;
    margin-right: 8px;
}

.picked {
    display: flex;
    align-items: center;
    padding-right: 7px;
    background: #929292;
    color: #fff;
    font-weight: 700;
}

.radio {
    width: 9px;
    height: 9px;
    margin-left: 3px;
}

.bottom {
    position: relative;
    display: grid;
    grid-template-columns: 1fr auto 1fr;
    align-items: center;
}

.navbar {
    display: flex;
    height: 14px;
    padding: 0 1px;
    background: #f3f3f3;
}

.navbar button {
    padding: 0 2px;
}

.navbar .drop {
    padding-right: 1px;
}

.navbar .drop::after {
    margin-left: 1px;
}

.navbar svg {
    width: 12px;
    height: 12px;
}

/* timeline */
.timeline {
    display: flex;
    align-items: center;
    height: 31px;
    padding: 0 8px 1px 2px;
    border-top: 1px solid #ddd;
    background: #f0f0f0;
}

.playback {
    display: flex;
    margin-right: 10px;
}

.playback button {
    width: 16px;
}

.playback svg {
    width: 9px;
    height: 9px;
    fill: #555;
}

.features {
    width: 48px;
    height: 24px;
}

.settings {
    margin-left: auto;
}

.settings svg {
    width: 12px;
    height: 12px;
}
```
